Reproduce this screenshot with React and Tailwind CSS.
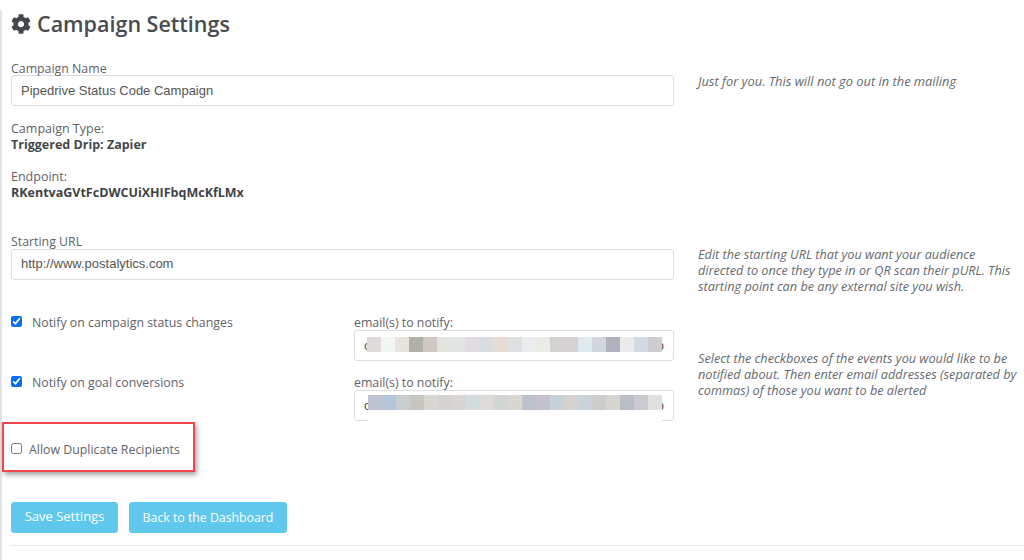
import React from 'react';
import { FaCog } from 'react-icons/fa';

const blurOne = ['#dfdbdb', '#f1f6f0', '#e7e4de', '#b2b0ab', '#cfc8c3', '#e4e4de', '#e0e5e3', '#e0dce2', '#d9dde2', '#e6dcd5', '#dfe0e2', '#e9eded', '#ebece6', '#d2d3d1', '#d5d0d1', '#deeaee', '#d2d7de', '#adb2be', '#ebece9', '#d2dbe2', '#cfcbd0'];
const blurTwo = ['#bfc3d0', '#b6c6da', '#c9cfd1', '#c6c7c0', '#dad6d1', '#d5d3d1', '#dad5d0', '#d5dce0', '#dedad8', '#d1d6d2', '#dad6d2', '#bcc1cc', '#c4c1cc', '#c6d2d8', '#d8d2cf', '#c9d4da', '#cdcdcc', '#d8d4cf', '#b9bdc6', '#cbcad0', '#dfe0e0'];

const BlurField = ({ colors, wide }) => (
  <div className="relative flex h-[31px] w-[320px] justify-between rounded-[3px] border border-[#dcdfe2] bg-white px-[9px] font-['Liberation_Sans',sans-serif] text-[13px] leading-[29px] text-[#555]">
    <span>c</span>
    <span>o</span>
    {/* pixelated-out addresses */}
    <div className={wide ? 'absolute left-[13px] top-[4px] flex h-[26px] w-[294px] items-start bg-white' : 'absolute left-[12px] top-[6px] flex h-[15px] w-[295px]'}>
      {colors.map((c, i) => (
        <div key={i} className="h-[15px] flex-1" style={{ backgroundColor: c }}></div>
      ))}
    </div>
  </div>
);

const Check = ({ checked }) => (
  <input
    type="checkbox"
    readOnly
    checked={checked}
    className="m-0 mb-[4px] h-[11px] w-[11px] shrink-0 accent-[#0b6ff0]"
  />
);

const App = () => {
  return (
    <div className="h-[560px] w-[1024px] overflow-hidden bg-white font-['Open_Sans',sans-serif] text-[12.35px] text-[#5f6368]">
      <div className="mt-[10px] h-[550px] border-l-2 border-[#e4e4e4] pl-[9px]">
        <h2 className="flex h-[28px] items-center gap-[6px] text-[21.5px] font-semibold leading-[28px] text-[#484c50]">
          <FaCog className="h-[20px] w-[20px] text-[#43474b]" />
          <span>Campaign Settings</span>
        </h2>

        <div className="mt-[22px] flex">
          <div className="w-[663px]">
            <label className="block h-[15px] leading-[17px]">Campaign Name</label>
            <div className="h-[31px] rounded-[3px] border border-[#dcdfe2] pl-[9px] font-['Liberation_Sans',sans-serif] text-[13px] leading-[30px] text-[#555]">
              Pipedrive Status Code Campaign
            </div>
          </div>
          <p className="ml-[24px] mt-[13px] text-[12.85px] italic leading-[16px] text-[#666a6e]">Just for you. This will not go out in the mailing</p>
        </div>

        <div className="mt-[15px] text-[12.5px] leading-[16px]">
          <div>Campaign Type:</div>
          <div className="font-bold text-[#44484c]">Triggered Drip: Zapier</div>
        </div>
        <div className="mt-[16px] text-[12.5px] leading-[16px]">
          <div>Endpoint:</div>
          <div className="font-bold text-[#3f4347]">RKentvaGVtFcDWCUiXHIFbqMcKfLMx</div>
        </div>

        <div className="mt-[32px] flex">
          <div className="w-[663px]">
            <label className="block h-[16px] leading-[17px]">Starting URL</label>
            <div className="h-[31px] rounded-[3px] border border-[#dcdfe2] pl-[9px] font-['Liberation_Sans',sans-serif] text-[13px] leading-[28px] text-[#555]">
              http://www.postalytics.com
            </div>
          </div>
          <p className="ml-[24px] mt-[13px] w-[320px] text-[12.7px] italic leading-[16px] text-[#666a6e]">
            Edit the starting URL that you want your audience directed to once they type in or QR scan their pURL. This starting point can be any external site you wish.
          </p>
        </div>

        <div className="mt-[21px] flex">
          <div className="w-[663px]">
            <div className="flex">
              <div className="flex h-[16px] w-[343px] items-center gap-[10px]">
                <Check checked />
                <span>Notify on campaign status changes</span>
              </div>
              <div>
                <div className="h-[15px] leading-[16px]">email(s) to notify:</div>
                <BlurField colors={blurOne} />
              </div>
            </div>
            <div className="mt-[14px] flex">
              <div className="flex h-[16px] w-[343px] items-center gap-[10px]">
                <Check checked />
                <span>Notify on goal conversions</span>
              </div>
              <div>
                <div className="h-[15px] leading-[16px]">email(s) to notify:</div>
                <BlurField colors={blurTwo} wide />
              </div>
            </div>
          </div>
          <p className="ml-[24px] mt-[35px] w-[320px] text-[12.7px] italic leading-[16px] text-[#666a6e]">
            Select the checkboxes of the events you would like to be notified about. Then enter email addresses (separated by commas) of those you want to be alerted
          </p>
        </div>

        <div className="relative mt-[21px] flex h-[16px] items-center gap-[7px]">
          <Check checked={false} />
          <span>Allow Duplicate Recipients</span>
          {/* red callout drawn over the form */}
          <div className="absolute left-[-9px] top-[-20px] h-[50px] w-[193px] border-[2px] border-[#f0474c] shadow-[2px_3px_5px_rgba(0,0,0,0.35)]"></div>
        </div>

        <div className="mt-[44px] flex gap-[11px]">
          <button className="h-[31px] w-[107px] rounded-[3px] border border-[#5bc8ee] bg-[#5fc8ec] pb-[1px] text-[13px] text-white">Save Settings</button>
          <button className="h-[31px] w-[158px] rounded-[3px] border border-[#5bc8ee] bg-[#5fc8ec] pt-[1px] text-[12.3px] text-white">Back to the Dashboard</button>
        </div>

        <div className="mt-[12px] h-px bg-[#e8e8e8]"></div>
      </div>
    </div>
  );
};

export default App;
